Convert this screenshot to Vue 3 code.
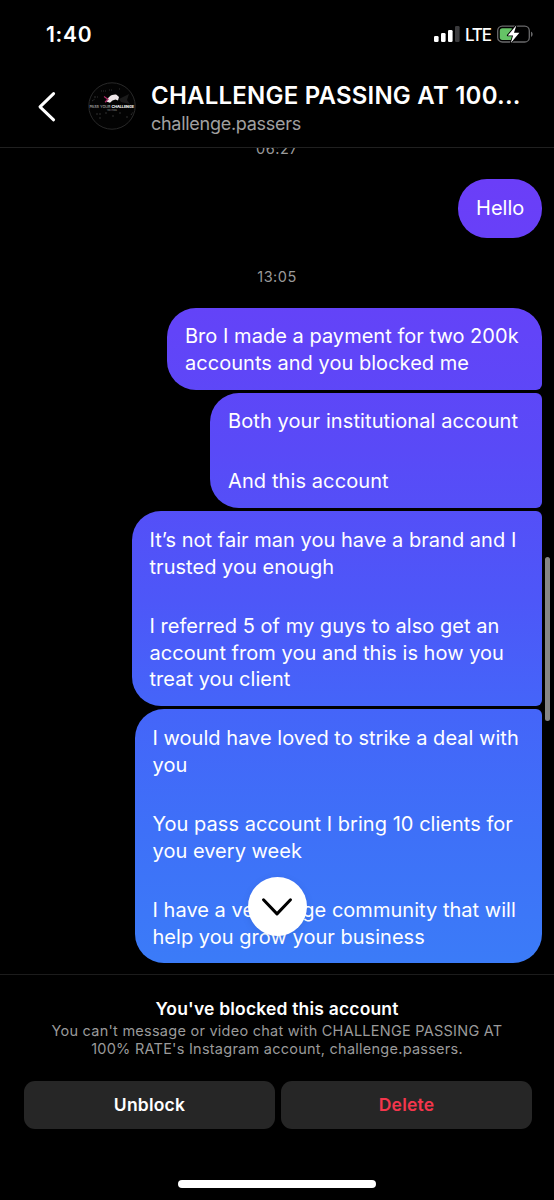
<script setup>
const messages = [
  { id: 1, shape: 'first', lines: ['Bro I made a payment for two 200k', 'accounts and you blocked me'] },
  { id: 2, shape: 'middle', lines: ['Both your institutional account', '', 'And this account'] },
  {
    id: 3,
    shape: 'middle',
    lines: [
      'It’s not fair man you have a brand and I',
      'trusted you enough',
      '',
      'I referred 5 of my guys to also get an',
      'account from you and this is how you',
      'treat you client',
    ],
  },
  {
    id: 4,
    shape: 'last',
    lines: [
      'I would have loved to strike a deal with',
      'you',
      '',
      'You pass account I bring 10 clients for',
      'you every week',
      '',
      'I have a very large community that will',
      'help you grow your business',
    ],
  },
]
</script>

<template>
  <div class="screen">
    <div class="status">
      <span class="clock">1:40</span>
      <div class="indicators">
        <svg class="signal" width="26" height="16" viewBox="0 0 26 16">
          <rect x="0" y="10" width="4.6" height="6" rx="1.3" fill="#fff" />
          <rect x="7" y="7" width="4.6" height="9" rx="1.3" fill="#fff" />
          <rect x="14" y="4" width="4.6" height="12" rx="1.3" fill="#fff" />
          <rect x="21" y="0" width="4.6" height="16" rx="1.3" fill="#3b3b3d" />
        </svg>
        <span class="network">LTE</span>
        <svg class="battery" width="37" height="20" viewBox="0 0 37 20">
          <rect x="0.7" y="2.2" width="31.6" height="15.8" rx="4.6" fill="none" stroke="#69696b" stroke-width="1.3" />
          <rect x="2.8" y="4.3" width="13.5" height="11.6" rx="2.6" fill="#65c466" />
          <path d="M34 7.7v5c2.2-.6 2.2-4.4 0-5z" fill="#69696b" />
          <path d="M19.4 1.2 10.8 11.4h5.3L13.8 19l8.6-10.2h-5.4z" fill="#fff" stroke="#000" stroke-width="1.8" paint-order="stroke" stroke-linejoin="round" />
        </svg>
      </div>
    </div>

    <header class="header">
      <svg class="back" width="20" height="32" viewBox="0 0 20 32">
        <path d="M16.6 2.6 3 15.8l13.6 13" fill="none" stroke="#fff" stroke-width="3" stroke-linecap="round" stroke-linejoin="round" />
      </svg>
      <svg class="avatar" width="48" height="48" viewBox="0 0 48 48">
        <circle cx="24" cy="24" r="23.2" fill="#030303" stroke="#292929" stroke-width="1" />
        <g fill="none" stroke="#303030" stroke-width="1">
          <path d="M6 15h4M4 19l3-2M8 32h5M11 36h3M17 31h2M24 34h3M31 31h3M38 35h3M43 33l2-3" stroke-dasharray="2 1" />
          <path d="M13 9h5M21 8h3M31 7h2" stroke-dasharray="1 1" />
        </g>
        <path d="M31 17l10-5-2 6 3 4-9-2z" fill="#1b1b1b" />
        <path d="M18.500 19.500c1.500-4.500 5-7.500 10-6.800l2.500 2.300-1 3.500-2.500-1-3 1-2.500 2.200z" fill="#eee6e8" />
        <path d="M16 14.500l3.500 2.500-2 3.500M20.500 17l-3.500 3" fill="none" stroke="#b02c68" stroke-width="1.100" />
        <text x="1.5" y="26.4" class="brand" textLength="21" fill="#aaa">PASS YOUR</text>
        <text x="23.5" y="26.4" class="brand strong" textLength="22.5" fill="#eee">CHALLENGE</text>
        <text x="19" y="29.3" class="tiny" textLength="10" fill="#999">YOU PASS</text>
      </svg>
      <div class="names">
        <div class="title">CHALLENGE PASSING AT 100...</div>
        <div class="handle">challenge.passers</div>
      </div>
    </header>

    <main class="thread">
      <div class="time clipped">06:27</div>
      <div class="bubble single">Hello</div>
      <div class="time">13:05</div>
      <div v-for="m in messages" :key="m.id" class="bubble" :class="[m.shape, `m${m.id}`]">
        <div v-for="(line, i) in m.lines" :key="i" class="line" :class="{ blank: !line }">{{ line }}</div>
      </div>
      <div class="scrollbar"></div>
      <button class="jump" aria-label="Scroll to latest">
        <svg width="34" height="22" viewBox="0 0 34 22">
          <path d="M3.5 3.8 17 17.9 30.5 3.8" fill="none" stroke="#000" stroke-width="3" stroke-linecap="round" stroke-linejoin="round" />
        </svg>
      </button>
    </main>

    <footer class="footer">
      <div class="blocked">You've blocked this account</div>
      <div class="note n1">You can't message or video chat with CHALLENGE PASSING AT</div>
      <div class="note n2">100% RATE's Instagram account, challenge.passers.</div>
      <div class="actions">
        <button class="action">Unblock</button>
        <button class="action danger">Delete</button>
      </div>
      <div class="home"></div>
    </footer>
  </div>
</template>

<style>
html,
body {
  background: #000;
}
</style>

<style scoped>
.screen {
  box-sizing: border-box;
  width: 554px;
  height: 1200px;
  overflow: hidden;
  display: flex;
  flex-direction: column;
  background: #000;
  color: #fff;
  font-family: Inter, "Liberation Sans", sans-serif;
  white-space: nowrap;
}
.status {
  height: 68px;
  flex: none;
  box-sizing: border-box;
  padding: 0 20px 0 46px;
  display: flex;
  justify-content: space-between;
  align-items: center;
}
.clock {
  font-size: 21px;
  font-weight: 600;
  letter-spacing: 0.7px;
}
.indicators {
  display: flex;
  align-items: center;
}
.network {
  width: 26px;
  font-size: 17px;
  line-height: 20px;
  font-weight: 500;
  letter-spacing: -1.2px;
  margin: 1px 6px 0 5px;
}
.header {
  height: 80px;
  flex: none;
  box-sizing: border-box;
  border-bottom: 1px solid #202020;
  display: flex;
  align-items: flex-start;
  padding: 14px 0 0 37px;
}
.back {
  margin-top: 9px;
}
.avatar {
  margin: 0 15px 0 31px;
}
.brand {
  font-size: 3.8px;
  font-weight: 500;
}
.strong {
  font-weight: 800;
}
.tiny {
  font-size: 2.2px;
}
.title {
  font-size: 24px;
  line-height: 28px;
  font-weight: 600;
  letter-spacing: 0.22px;
}
.handle {
  font-size: 18px;
  line-height: 24px;
  margin-top: 2px;
  letter-spacing: -0.28px;
  color: #a0a0a0;
}
.thread {
  position: relative;
  height: 826px;
  flex: none;
  box-sizing: border-box;
  overflow: hidden;
  display: flex;
  flex-direction: column;
  align-items: flex-end;
  padding-right: 12px;
}
.time {
  align-self: stretch;
  margin: 28px -12px 20.5px 0;
  height: 21px;
  line-height: 21px;
  text-align: center;
  font-size: 14.5px;
  letter-spacing: 0.5px;
  color: #9a9a9a;
}
.time.clipped {
  margin: -10px -12px 20px 0;
}
.bubble {
  box-sizing: border-box;
  flex: none;
  padding: 15.5px 18px 13.5px;
  margin-bottom: 3px;
  font-size: 20px;
  line-height: 26.7px;
  letter-spacing: 0.03px;
  background: linear-gradient(
    #6e3cf8 0,
    #6b3ef8 180px,
    #6244f8 330px,
    #594af7 450px,
    #4d57f8 600px,
    #4564f9 700px,
    #3e70f8 830px,
    #3b7bf8 960px
  ) fixed;
}
.line {
  height: 26.7px;
}
.line.blank {
  height: 32.6px;
}
.single {
  width: 84px;
  height: 59px;
  margin: 0;
  padding-top: 15.5px;
  border-radius: 29px;
}
.first {
  border-radius: 29px 29px 6px 29px;
}
.middle {
  border-radius: 29px 6px 6px 29px;
}
.last {
  border-radius: 29px 6px 29px 29px;
}
.m1 {
  width: 375px;
}
.m2 {
  width: 332px;
  letter-spacing: 0.1px;
}
.m3 {
  width: 410.5px;
  padding: 16.2px 18px 12.8px;
}
.m4 {
  width: 407.5px;
  padding: 16.2px 18px 12.8px;
}
.scrollbar {
  position: absolute;
  right: 4px;
  top: 409px;
  width: 5px;
  height: 164px;
  border-radius: 3px;
  background: #858585;
}
.jump {
  position: absolute;
  left: 247.5px;
  top: 729px;
  width: 59px;
  height: 59px;
  padding: 0;
  border: 0;
  border-radius: 50%;
  background: #fff;
  display: flex;
  align-items: center;
  justify-content: center;
  box-shadow: 0 2px 8px rgba(0, 0, 0, 0.08);
}
.footer {
  flex: 1;
  box-sizing: border-box;
  border-top: 1px solid #1c1c1c;
  display: flex;
  flex-direction: column;
  align-items: center;
  padding-top: 22px;
}
.blocked {
  font-size: 17.5px;
  line-height: 24px;
  font-weight: 600;
  letter-spacing: 0.18px;
}
.note {
  font-size: 14.5px;
  line-height: 18px;
  letter-spacing: 0.25px;
  color: #9a9a9a;
}
.note.n1 {
  margin-top: 1px;
}
.actions {
  align-self: stretch;
  display: flex;
  gap: 6px;
  margin: 23px 22px 0 24px;
}
.action {
  flex: 1;
  height: 48px;
  padding: 0 0 2px;
  border: 0;
  border-radius: 11px;
  background: #262626;
  color: #fff;
  font: 600 17.5px Inter, "Liberation Sans", sans-serif;
  letter-spacing: 0.22px;
}
.danger {
  color: #f4364c;
}
.home {
  width: 198px;
  height: 8px;
  margin-top: 51px;
  border-radius: 4px;
  background: #fff;
}
</style>
